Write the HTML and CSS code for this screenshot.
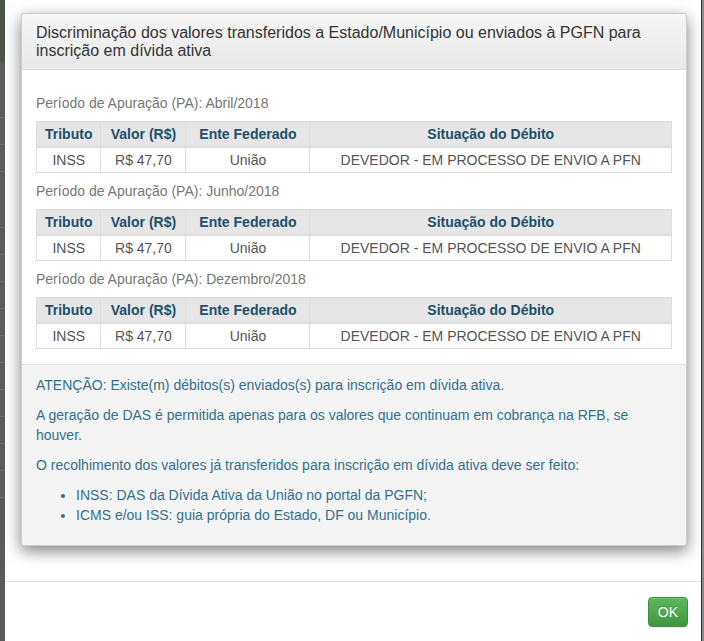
FILE: index.html
```html
<!DOCTYPE html>
<html lang="pt-BR">
<head>
<meta charset="utf-8">
<title>Discriminação dos valores</title>
<link rel="stylesheet" href="styles.css">
</head>
<body>
<div class="page">
  <div class="backdrop-left">
    <div class="bg-band bg-olive"></div>
    <div class="bg-band bg-row tall"></div>
    <div class="bg-band bg-row"></div>
    <div class="bg-band bg-row"></div>
    <div class="bg-band bg-row tall"></div>
    <div class="bg-band bg-row"></div>
    <div class="bg-band bg-row"></div>
    <div class="bg-band bg-row"></div>
    <div class="bg-band bg-row"></div>
    <div class="bg-band bg-row"></div>
    <div class="bg-band bg-row"></div>
    <div class="bg-band bg-row"></div>
    <div class="bg-band bg-row"></div>
    <div class="bg-band bg-row"></div>
    <div class="bg-band bg-row"></div>
  </div>

  <div class="modal">
    <div class="modal-body">
      <div class="panel">
        <div class="panel-head">
          <h4 class="panel-title">Discriminação dos valores transferidos a Estado/Município ou enviados à PGFN para inscrição em dívida ativa</h4>
        </div>

        <div class="panel-body">
          <p class="period">Período de Apuração (PA): Abril/2018</p>
          <table class="debts">
            <thead>
              <tr><th class="c-trib">Tributo</th><th class="c-val">Valor (R$)</th><th class="c-ente">Ente Federado</th><th>Situação do Débito</th></tr>
            </thead>
            <tbody>
              <tr><td>INSS</td><td>R$ 47,70</td><td>União</td><td>DEVEDOR - EM PROCESSO DE ENVIO A PFN</td></tr>
            </tbody>
          </table>

          <p class="period">Período de Apuração (PA): Junho/2018</p>
          <table class="debts">
            <thead>
              <tr><th class="c-trib">Tributo</th><th class="c-val">Valor (R$)</th><th class="c-ente">Ente Federado</th><th>Situação do Débito</th></tr>
            </thead>
            <tbody>
              <tr><td>INSS</td><td>R$ 47,70</td><td>União</td><td>DEVEDOR - EM PROCESSO DE ENVIO A PFN</td></tr>
            </tbody>
          </table>

          <p class="period">Período de Apuração (PA): Dezembro/2018</p>
          <table class="debts last">
            <thead>
              <tr><th class="c-trib">Tributo</th><th class="c-val">Valor (R$)</th><th class="c-ente">Ente Federado</th><th>Situação do Débito</th></tr>
            </thead>
            <tbody>
              <tr><td>INSS</td><td>R$ 47,70</td><td>União</td><td>DEVEDOR - EM PROCESSO DE ENVIO A PFN</td></tr>
            </tbody>
          </table>
        </div>

        <div class="panel-note">
          <p>ATENÇÃO: Existe(m) débitos(s) enviados(s) para inscrição em dívida ativa.</p>
          <p>A geração de DAS é permitida apenas para os valores que continuam em cobrança na RFB, se houver.</p>
          <p>O recolhimento dos valores já transferidos para inscrição em dívida ativa deve ser feito:</p>
          <ul>
            <li>INSS: DAS da Dívida Ativa da União no portal da PGFN;</li>
            <li>ICMS e/ou ISS: guia própria do Estado, DF ou Município.</li>
          </ul>
        </div>
      </div>
    </div>

    <div class="modal-footer">
      <button class="btn-ok" type="button">OK</button>
    </div>
  </div>

  <div class="backdrop-right"></div>
</div>
</body>
</html>
```

FILE: styles.css
```css
html, body {
  margin: 0;
  padding: 0;
}

body {
  font-family: "Liberation Sans", Arial, sans-serif;
  font-size: 14px;
  line-height: 20px;
  color: #333;
  background: #3a3a3a;
}

.page {
  display: flex;
  height: 641px;
  overflow: hidden;
}

/* dimmed page behind the dialog */
.backdrop-left {
  width: 5px;
  flex: none;
  display: flex;
  flex-direction: column;
  background: #5b5b5b;
}

.bg-band {
  flex: none;
}

.bg-olive {
  height: 62px;
  background: #4d5544;
}

.bg-row {
  height: 26px;
  background: #5c5c5c;
  border-bottom: 1px solid #707070;
}

.bg-row.tall {
  height: 55px;
}

.backdrop-right {
  width: 3px;
  flex: none;
  background: linear-gradient(to right, #2f2f2f 0, #2f2f2f 1px, #8a8a8a 1px);
}

/* outer dialog */
.modal {
  width: 696px;
  flex: none;
  background: #fff;
  display: flex;
  flex-direction: column;
}

.modal-body {
  padding: 13px 14px 35px 16px;
}

.modal-footer {
  border-top: 1px solid #e5e5e5;
  padding: 15px 13px 15px 15px;
  display: flex;
  justify-content: flex-end;
}

.btn-ok {
  font-family: "Liberation Sans", Arial, sans-serif;
  font-size: 14px;
  line-height: 20px;
  color: #fff;
  padding: 4px 9px;
  border: 1px solid #3e8f3e;
  border-radius: 4px;
  background-image: linear-gradient(to bottom, #5cb85c 0, #419641 100%);
  text-shadow: 0 -1px 0 rgba(0, 0, 0, .2);
  box-shadow: inset 0 1px 0 rgba(255, 255, 255, .15), 0 1px 1px rgba(0, 0, 0, .075);
  cursor: pointer;
}

/* inner panel */
.panel {
  background: #fff;
  border: 1px solid rgba(0, 0, 0, .2);
  border-radius: 4px;
  box-shadow: 0 5px 15px rgba(0, 0, 0, .5);
  overflow: hidden;
}

.panel-head {
  padding: 10px 15px 9px 14px;
  border-bottom: 1px solid #e0e0e0;
  background-image: linear-gradient(to bottom, #f6f6f6 0, #e9e9e9 100%);
}

.panel-title {
  margin: 0;
  font-size: 16px;
  line-height: 18px;
  font-weight: normal;
  color: #333;
}

.panel-body {
  padding: 23px 15px 15px 14px;
}

.period {
  margin: 0 0 8px;
  color: #777;
}

.debts {
  width: 636px;
  border-collapse: collapse;
  margin-bottom: 8px;
  text-align: center;
}

.debts.last {
  margin-bottom: 0;
}

.debts th,
.debts td {
  border: 1px solid #ddd;
  padding: 2px 8px;
  line-height: 20px;
}

.debts th {
  background: #e6e6e6;
  color: #1d4f6a;
  font-weight: bold;
  border-bottom-width: 2px;
}

.debts td {
  color: #555;
}

.debts .c-trib { width: 47px; }
.debts .c-val { width: 68px; }
.debts .c-ente { width: 107px; }

.panel-note {
  background: #f4f4f4;
  border-top: 1px solid #e3e3e3;
  padding: 10px 15px 10px 14px;
  color: #31708f;
}

.panel-note p {
  margin: 0 0 10px;
}

.panel-note ul {
  margin: 0 0 10px;
  padding-left: 40px;
}
```
